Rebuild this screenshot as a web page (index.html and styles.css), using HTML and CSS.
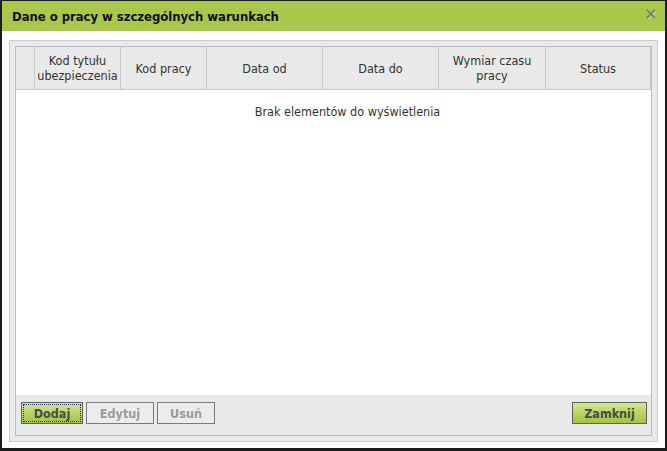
FILE: index.html
```html
<!DOCTYPE html>
<html lang="pl">
<head>
<meta charset="utf-8">
<title>Dane o pracy w szczególnych warunkach</title>
<link rel="stylesheet" href="styles.css">
</head>
<body>
<div class="window">
  <div class="titlebar">
    <span class="title">Dane o pracy w szczególnych warunkach</span>
    <svg class="close" width="10" height="10" viewBox="0 0 10 10" aria-label="Zamknij">
      <path d="M1.5 1.5 L8.5 8.5 M8.5 1.5 L1.5 8.5" stroke="#d9e6b0" stroke-width="2.6" stroke-linecap="square" transform="translate(0.5,0.5)"/>
      <path d="M1.5 1.5 L8.5 8.5 M8.5 1.5 L1.5 8.5" stroke="#76856a" stroke-width="2.2" stroke-linecap="square"/>
    </svg>
  </div>
  <div class="body">
    <div class="panel">
      <div class="grid">
        <div class="head">
          <div class="hc"></div>
          <div class="hc">Kod tytułu ubezpieczenia</div>
          <div class="hc">Kod pracy</div>
          <div class="hc">Data od</div>
          <div class="hc">Data do</div>
          <div class="hc">Wymiar czasu<br>pracy</div>
          <div class="hc last">Status</div>
        </div>
        <div class="rows">
          <div class="empty">Brak elementów do wyświetlenia</div>
        </div>
        <div class="toolbar">
          <div class="btns">
            <button class="btn green focus w-dodaj">Dodaj</button>
            <button class="btn disabled w-edytuj">Edytuj</button>
            <button class="btn disabled w-usun">Usuń</button>
          </div>
          <button class="btn green w-zamknij">Zamknij</button>
        </div>
      </div>
    </div>
  </div>
</div>
</body>
</html>
```
FILE: styles.css
```css
html, body {
  margin: 0;
  padding: 0;
  background: #ffffff;
}
body {
  font-family: "DejaVu Sans Condensed", "DejaVu Sans", sans-serif;
  font-size: 12.5px;
  color: #333;
}
.window {
  box-sizing: border-box;
  width: 667px;
  height: 451px;
  border-style: solid;
  border-color: #1c1c1c;
  border-width: 1px 2px 3px 2px;
  display: flex;
  flex-direction: column;
  background: #fff;
}
.titlebar {
  height: 30px;
  flex: none;
  background: #a9c84b;
  display: flex;
  align-items: center;
  justify-content: space-between;
  padding: 0 9px 0 10px;
}
.title {
  font-weight: bold;
  font-size: 13px;
  color: #111;
  letter-spacing: -0.05px;
}
.close {
  display: block;
  margin-top: -4px;
}
.body {
  flex: 1;
  display: flex;
  flex-direction: column;
  padding: 9px 7px 6px 7px;
}
.panel {
  flex: 1;
  display: flex;
  flex-direction: column;
  border: 1px solid #cbcbcb;
  background: #eaeaea;
  padding: 5px 5px 5px 5px;
}
.grid {
  flex: 1;
  display: flex;
  flex-direction: column;
  border: 1px solid #b9bcc0;
  background: #fff;
}
.head {
  display: grid;
  grid-template-columns: 19px 86px 86px 116px 116px 107px 1fr;
  height: 42px;
  background: #e9e9e9;
  border-bottom: 1px solid #c8c8c8;
}
.hc {
  border-right: 1px solid #c8c8c8;
  display: flex;
  align-items: center;
  justify-content: center;
  text-align: center;
  line-height: 15px;
  color: #333;
  white-space: normal;
}
.rows {
  flex: 1;
  background: #fff;
}
.empty {
  text-align: center;
  padding: 14px 0 0 28px;
  color: #333;
}
.toolbar {
  flex: none;
  background: #e9e9e9;
  display: flex;
  justify-content: space-between;
  align-items: flex-start;
  padding: 7px 4px 11px 5px;
}
.btns {
  display: flex;
  gap: 3px;
}
.btn {
  box-sizing: border-box;
  height: 22px;
  font-family: "DejaVu Sans Condensed", "DejaVu Sans", sans-serif;
  font-weight: bold;
  font-size: 12.5px;
  padding: 0;
  margin: 0;
  border: 1px solid #6b6b6b;
  display: flex;
  align-items: center;
  justify-content: center;
  position: relative;
}
.btn.green {
  background: linear-gradient(#d3e596, #b7d35e 55%, #a4c244);
  color: #4a4a4a;
  border-color: #5f6457;
}
.btn.disabled {
  background: #ececec;
  color: #9a9a9a;
  border-color: #7a7a7a;
}
.btn.focus::after {
  content: "";
  position: absolute;
  left: 1px;
  top: 1px;
  right: 1px;
  bottom: 1px;
  border: 1px dotted #2a2a8a;
}
.w-dodaj { width: 62px; }
.w-edytuj { width: 68px; }
.w-usun { width: 58px; }
.w-zamknij { width: 75px; }
```
